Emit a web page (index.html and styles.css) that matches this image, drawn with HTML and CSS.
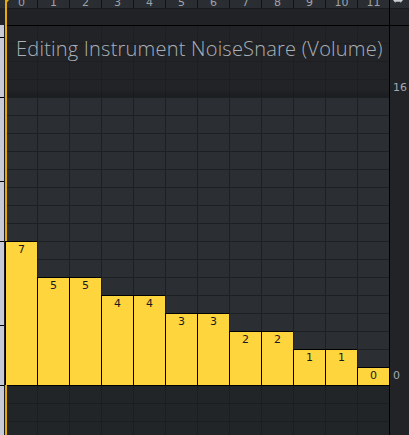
FILE: index.html
```html
<!DOCTYPE html>
<html>
<head>
<meta charset="utf-8">
<link rel="stylesheet" href="styles.css">
</head>
<body>
<div class="screen">
  <div class="ruler-left">
    <div class="rl-top"></div>
    <div class="rl-strip">
      <div class="seg seg-first"></div>
      <div class="seg seg-short"></div>
      <div class="seg seg-long"></div>
      <div class="seg seg-short"></div>
      <div class="seg seg-long"></div>
      <div class="seg seg-short"></div>
      <div class="seg seg-rest"></div>
    </div>
  </div>

  <div class="main">
    <div class="col-header">
      <div class="hcell"><span>0</span></div>
      <div class="hcell"><span>1</span></div>
      <div class="hcell"><span>2</span></div>
      <div class="hcell"><span>3</span></div>
      <div class="hcell"><span>4</span></div>
      <div class="hcell"><span>5</span></div>
      <div class="hcell"><span>6</span></div>
      <div class="hcell"><span>7</span></div>
      <div class="hcell"><span>8</span></div>
      <div class="hcell"><span>9</span></div>
      <div class="hcell"><span>10</span></div>
      <div class="hcell"><span>11</span></div>
    </div>
    <div class="band"></div>
    <div class="title-area">
      <h1 class="title">Editing Instrument NoiseSnare (Volume)</h1>
    </div>
    <div class="values">
      <div class="bar" style="height:144px"><span>7</span></div>
      <div class="bar" style="height:108px"><span>5</span></div>
      <div class="bar" style="height:108px"><span>5</span></div>
      <div class="bar" style="height:90px"><span>4</span></div>
      <div class="bar" style="height:90px"><span>4</span></div>
      <div class="bar" style="height:72px"><span>3</span></div>
      <div class="bar" style="height:72px"><span>3</span></div>
      <div class="bar" style="height:54px"><span>2</span></div>
      <div class="bar" style="height:54px"><span>2</span></div>
      <div class="bar" style="height:36px"><span>1</span></div>
      <div class="bar" style="height:36px"><span>1</span></div>
      <div class="bar" style="height:18px"><span>0</span></div>
    </div>
    <div class="lower"></div>
  </div>

  <div class="ruler-right">
    <div class="rr-header">
      <svg class="swap-icon" width="10" height="4" viewBox="0 0 10 4">
        <path d="M0 0 L2.5 3 L2.5 1.8 L7.5 1.8 L7.5 3 L10 0 Z" fill="#c9cdd4"/>
      </svg>
    </div>
    <div class="rr-band"></div>
    <div class="rr-title"><span class="rlabel">16</span></div>
    <div class="rr-values"><span class="rlabel">0</span></div>
    <div class="rr-lower"></div>
  </div>

  <div class="playhead">
    <svg class="playhead-tip" width="4" height="5" viewBox="0 0 4 5">
      <polygon points="0,0 4,0 0,5" fill="#e8aa0a"/>
    </svg>
  </div>
</div>
</body>
</html>
```

FILE: styles.css
```css
* { box-sizing: border-box; }

html, body {
  margin: 0;
  padding: 0;
  background: #212327;
}

.screen {
  position: relative;
  width: 409px;
  height: 435px;
  display: flex;
  overflow: hidden;
  font-family: "Open Sans", "DejaVu Sans", sans-serif;
}

/* ---------- left ruler ---------- */
.ruler-left {
  width: 5px;
  display: flex;
  flex-direction: column;
}
.rl-top {
  height: 25px;
  flex: none;
  background: linear-gradient(#2a2d31 0 8px, #202226 8px);
}
.rl-strip {
  flex: 1;
  display: flex;
  flex-direction: column;
  background: #c6cbd7;
  border-right: 1px solid #1a1c1f;
}
.seg { flex: none; border-top: 1px solid #000; }
.seg-first { height: 12px; border-top: none; }
.seg-short { height: 60px; }
.seg-long { height: 84px; }
.seg-rest { flex: 1; }

/* ---------- main grid ---------- */
.main {
  width: 384px;
  display: flex;
  flex-direction: column;
}

.col-header {
  height: 8px;
  display: flex;
  background: #2a2d31;
  overflow: hidden;
}
.hcell {
  width: 32px;
  border-left: 1px solid #111214;
  text-align: center;
  color: #9ea3ab;
  font-family: "DejaVu Sans", sans-serif;
  font-size: 11px;
  overflow: hidden;
}
.hcell span {
  display: block;
  line-height: 11px;
  margin-top: -3px;
}

.band {
  height: 17px;
  background: #202226;
  border-top: 1px solid #17191b;
}

.title-area {
  height: 72px;
  background-color: #212327;
  background-image:
    linear-gradient(to bottom, rgba(0,0,0,0) 64px, rgba(0,0,0,0.18) 72px),
    linear-gradient(to right, #1c1e21 1px, transparent 1px),
    linear-gradient(to bottom, #1c1e21 1px, transparent 1px);
  background-size: 100% 100%, 32px 18px, 32px 18px;
  box-shadow: inset 0 1px 0 #000;
  padding: 10px 0 0 11px;
}
.title {
  margin: 0;
  font-family: "Open Sans", sans-serif;
  font-weight: 300;
  font-size: 20px;
  line-height: 28px;
  color: #abb0b8;
  white-space: nowrap;
  letter-spacing: 0.22px;
}

.values {
  height: 288px;
  display: flex;
  align-items: flex-end;
  background-color: #2b2f33;
  background-image:
    linear-gradient(to right, #1d2023 1px, transparent 1px),
    linear-gradient(to bottom, #1d2023 1px, transparent 1px);
  background-size: 32px 18px;
}
.bar {
  position: relative;
  z-index: 2;
  width: 32px;
  flex: none;
  background: #ffd53d;
  border-left: 1px solid #000;
  border-top: 1px solid #000;
  text-align: center;
  padding-top: 1px;
}
.bar span {
  display: block;
  font-family: "DejaVu Sans", sans-serif;
  font-size: 11px;
  line-height: 13px;
  color: #1a1a1a;
}

.lower {
  flex: 1;
  background-color: #222528;
  background-image:
    linear-gradient(to right, #1b1d20 1px, transparent 1px),
    linear-gradient(to bottom, #1b1d20 1px, transparent 1px);
  background-size: 32px 18px;
  box-shadow: inset 0 1px 0 #000;
}

/* ---------- right ruler ---------- */
.ruler-right {
  width: 20px;
  display: flex;
  flex-direction: column;
  background: #212327;
  border-left: 1px solid #000;
}
.rr-header {
  height: 8px;
  background: #2a2d31;
  overflow: hidden;
  padding-left: 3px;
}
.swap-icon { display: block; }
.rr-band {
  height: 17px;
  background: #202226;
  border-top: 1px solid #17191b;
}
.rr-title, .rr-values {
  display: flex;
  flex-direction: column;
  justify-content: flex-end;
}
.rr-title {
  height: 72px;
  box-shadow: inset 0 1px 0 #000;
}
.rr-values { height: 288px; }
.rr-lower { flex: 1; }
.rlabel {
  display: block;
  line-height: 18px;
  padding-left: 3px;
  font-family: "DejaVu Sans", sans-serif;
  font-size: 11px;
  color: #a3a8b0;
}

/* ---------- playhead overlay ---------- */
.playhead {
  position: absolute;
  left: 5px;
  top: 0;
  width: 2px;
  height: 100%;
  background: #e8aa0a;
  z-index: 1;
}
.playhead-tip {
  position: absolute;
  left: 0;
  top: 0;
  display: block;
}
```
